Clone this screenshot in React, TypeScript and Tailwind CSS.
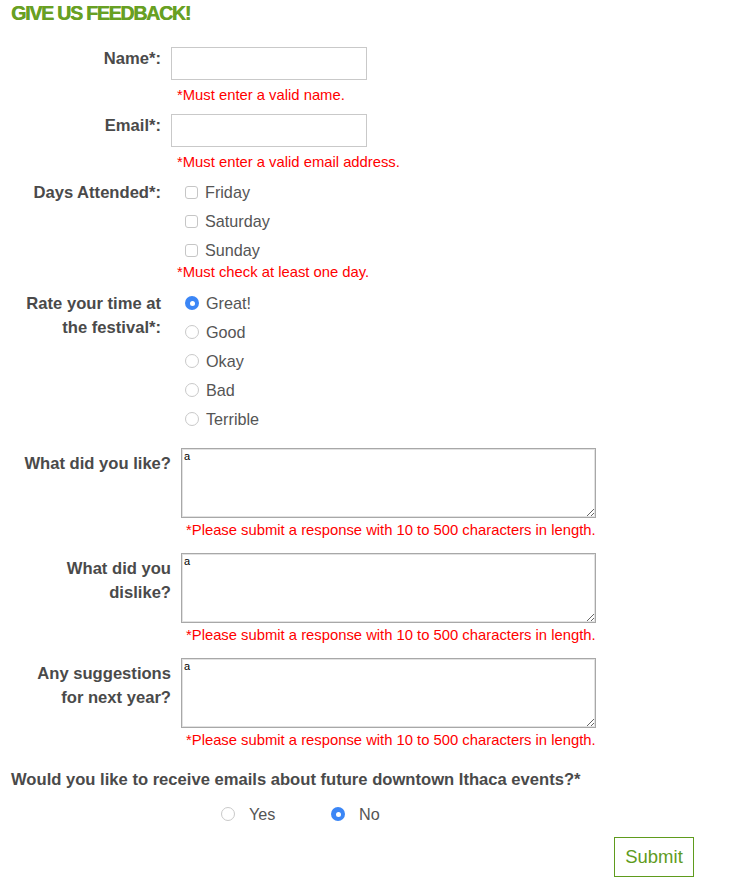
import React from 'react';

const font = { fontFamily: '"Liberation Sans", Arial, sans-serif' };

function Radio({ checked }: { checked?: boolean }) {
  return checked ? (
    <span className="w-[14px] h-[14px] rounded-full bg-[#3b86f6] flex items-center justify-center shrink-0">
      <span className="w-[5px] h-[5px] rounded-full bg-white" />
    </span>
  ) : (
    <span className="w-[14px] h-[14px] rounded-full border border-[#c9c9c9] bg-white shrink-0" />
  );
}

function Checkbox() {
  return <span className="w-[13px] h-[13px] rounded-[3px] border border-[#c6c6c6] bg-white shrink-0" />;
}

function ErrorText({ children, indent }: { children: React.ReactNode; indent: string }) {
  return <p className={`${indent} text-[14.8px] leading-[17px] text-[#ff0000]`}>{children}</p>;
}

function TextRow({ label, error, first }: { label: string; error: string; first?: boolean }) {
  return (
    <div className={`flex gap-[10px] ${first ? '' : 'mt-[9px]'}`}>
      <div className="w-[161px] shrink-0 pt-[1px] text-right font-bold text-[16.6px] leading-6 text-[#4a4a4a]">{label}</div>
      <div>
        <input className="mt-[1px] block w-[196px] h-[33px] border border-[#c9c9c9] bg-white outline-none px-2" />
        <div className="mt-[7px]">
          <ErrorText indent="ml-[6px]">{error}</ErrorText>
        </div>
      </div>
    </div>
  );
}

function AreaRow({ label, first }: { label: React.ReactNode; first?: boolean }) {
  return (
    <div className={`flex gap-[10px] ${first ? 'mt-[17px]' : 'mt-[14px]'}`}>
      <div className="w-[171px] shrink-0 pt-[4px] text-right font-bold text-[16.6px] leading-6 text-[#4a4a4a]">{label}</div>
      <div>
        <textarea
          defaultValue="a"
          className="block w-[415px] h-[70px] border border-[#a8a8a8] shadow-[inset_0_0_0_1px_#e2e2e2] bg-white px-[2px] py-[1px] text-[11px] leading-[13px] text-black outline-none"
        />
        <div className="mt-[4px]">
          <ErrorText indent="ml-[5px]">*Please submit a response with 10 to 500 characters in length.</ErrorText>
        </div>
      </div>
    </div>
  );
}

export default function App() {
  return (
    <div className="w-[735px] min-h-[888px] bg-white" style={font}>
      <h2 className="pl-[11px] h-[26px] text-[19.5px] leading-[26px] font-bold tracking-[-1.2px] text-[#68a023] [text-shadow:0.5px_0_0_#68a023]">
        GIVE US FEEDBACK!
      </h2>

      <div className="mt-[20px]">
        <TextRow first label="Name*:" error="*Must enter a valid name." />
        <TextRow label="Email*:" error="*Must enter a valid email address." />

        {/* Days attended */}
        <div className="flex gap-[10px] mt-[9px]">
          <div className="w-[161px] shrink-0 pt-[1px] text-right font-bold text-[16.6px] leading-6 text-[#4a4a4a]">Days Attended*:</div>
          <div>
            <div className="ml-[14px] flex flex-col gap-[5px]">
              {['Friday', 'Saturday', 'Sunday'].map((d) => (
                <div key={d} className="h-6 flex items-center gap-[7px] text-[16.2px] text-[#555]">
                  <Checkbox />
                  <span>{d}</span>
                </div>
              ))}
            </div>
            <div className="mt-[2px]">
              <ErrorText indent="ml-[6px]">*Must check at least one day.</ErrorText>
            </div>
          </div>
        </div>

        {/* Rating */}
        <div className="flex gap-[10px] mt-[10px]">
          <div className="w-[161px] shrink-0 pt-[1px] text-right font-bold text-[16.6px] leading-6 text-[#4a4a4a]">
            Rate your time at
            <br />
            the festival*:
          </div>
          <div className="ml-[14px] flex flex-col gap-[5px]">
            {['Great!', 'Good', 'Okay', 'Bad', 'Terrible'].map((r, i) => (
              <div key={r} className="h-6 flex items-center gap-[7px] text-[16.2px] text-[#555]">
                <Radio checked={i === 0} />
                <span>{r}</span>
              </div>
            ))}
          </div>
        </div>

        <AreaRow first label="What did you like?" />
        <AreaRow
          label={
            <>
              What did you
              <br />
              dislike?
            </>
          }
        />
        <AreaRow
          label={
            <>
              Any suggestions
              <br />
              for next year?
            </>
          }
        />

        <p className="mt-[19px] pl-[11px] font-bold text-[16.6px] leading-6 text-[#4a4a4a]">
          Would you like to receive emails about future downtown Ithaca events?*
        </p>

        <div className="mt-[10px] pl-[221px] h-6 flex items-center text-[16.2px] text-[#555]">
          <div className="w-[110px] flex items-center gap-[14px]">
            <Radio />
            <span>Yes</span>
          </div>
          <div className="flex items-center gap-[14px]">
            <Radio checked />
            <span>No</span>
          </div>
        </div>

        <div className="mt-[11px] w-[694px] flex justify-end">
          <button className="w-[80px] h-[40px] border border-[#5f9b1d] bg-white text-[18.5px] leading-[38px] text-[#5f9b1d]">
            Submit
          </button>
        </div>
      </div>
    </div>
  );
}
